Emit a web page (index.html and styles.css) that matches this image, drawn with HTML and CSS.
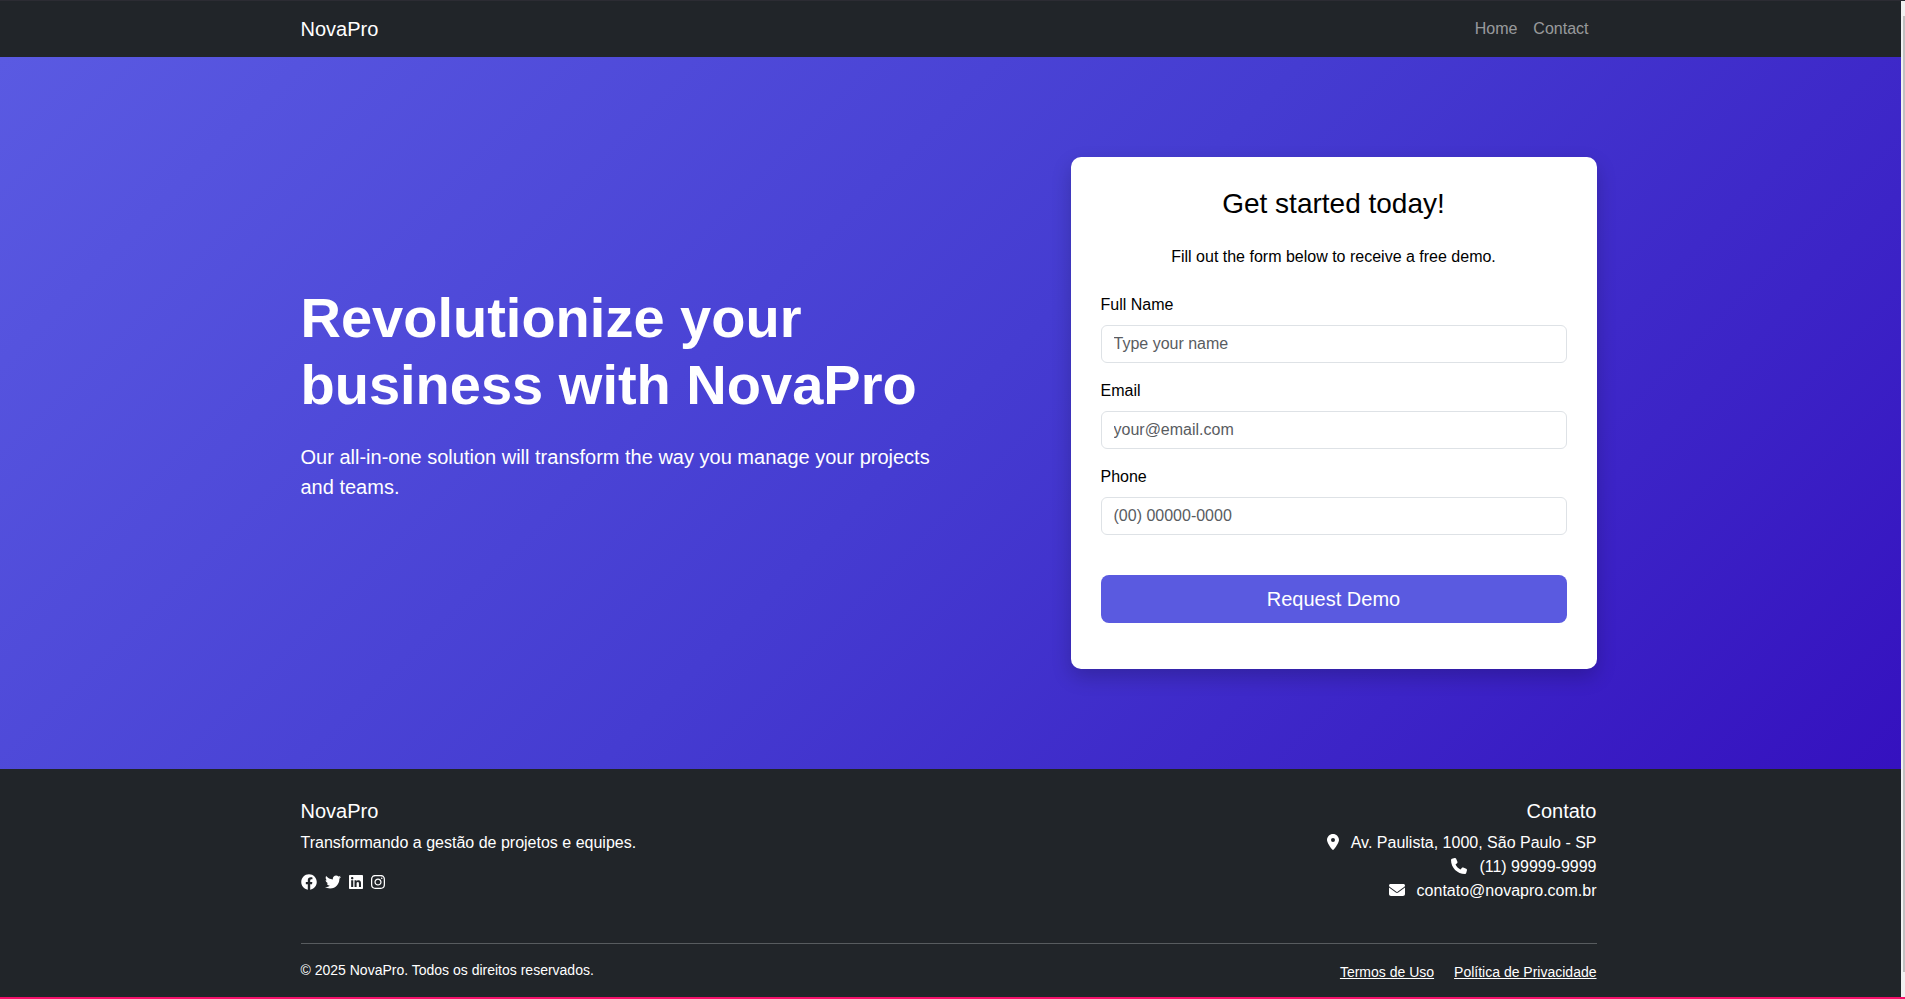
FILE: index.html
```html
<!DOCTYPE html>
<html lang="en">
<head>
<meta charset="utf-8">
<meta name="viewport" content="width=device-width, initial-scale=1">
<title>NovaPro</title>
<link rel="stylesheet" href="styles.css">
</head>
<body>
<div class="viewport">
  <div class="page">
    <header class="navbar">
      <div class="container navbar-inner">
        <a class="brand" href="#">NovaPro</a>
        <nav class="nav">
          <a class="nav-link" href="#">Home</a>
          <a class="nav-link" href="#contact">Contact</a>
        </nav>
      </div>
    </header>

    <main class="hero">
      <div class="container hero-grid">
        <div class="hero-copy">
          <h1 class="hero-title">Revolutionize your business with NovaPro</h1>
          <p class="hero-lead">Our all-in-one solution will transform the way you manage your projects and teams.</p>
        </div>
        <form class="card">
          <h2 class="card-title">Get started today!</h2>
          <p class="card-text">Fill out the form below to receive a free demo.</p>
          <div class="field">
            <label for="name">Full Name</label>
            <input id="name" type="text" placeholder="Type your name">
          </div>
          <div class="field">
            <label for="email">Email</label>
            <input id="email" type="email" placeholder="your@email.com">
          </div>
          <div class="field">
            <label for="phone">Phone</label>
            <input id="phone" type="tel" placeholder="(00) 00000-0000">
          </div>
          <button class="submit" type="button">Request Demo</button>
        </form>
      </div>
    </main>

    <footer class="footer" id="contact">
      <div class="container">
        <div class="footer-top">
          <div>
            <h5 class="footer-title">NovaPro</h5>
            <p class="footer-text">Transformando a gestão de projetos e equipes.</p>
            <div class="social">
              <a href="#" aria-label="Facebook"><svg class="icon" viewBox="0 0 512 512"><path d="M504 256C504 119 393 8 256 8S8 119 8 256c0 123.78 90.69 226.38 209.25 245V327.69h-63V256h63v-54.64c0-62.15 37-96.48 93.67-96.48 27.14 0 55.52 4.84 55.52 4.84v61h-31.28c-30.8 0-40.41 19.12-40.41 38.73V256h68.78l-11 71.69h-57.78V501C413.31 482.38 504 379.78 504 256z"/></svg></a>
              <a href="#" aria-label="Twitter"><svg class="icon" viewBox="0 0 512 512"><path d="M459.37 151.716c.325 4.548.325 9.097.325 13.645 0 138.72-105.583 298.558-298.558 298.558-59.452 0-114.68-17.219-161.137-47.106 8.447.974 16.568 1.299 25.34 1.299 49.055 0 94.213-16.568 130.274-44.832-46.132-.975-84.792-31.188-98.112-72.772 6.498.974 12.995 1.624 19.818 1.624 9.421 0 18.843-1.3 27.614-3.573-48.081-9.747-84.143-51.98-84.143-102.985v-1.299c13.969 7.797 30.214 12.67 47.431 13.319-28.264-18.843-46.781-51.005-46.781-87.391 0-19.492 5.197-37.36 14.294-52.954 51.655 63.675 129.3 105.258 216.365 109.807-1.624-7.797-2.599-15.918-2.599-24.04 0-57.828 46.782-104.934 104.934-104.934 30.213 0 57.502 12.67 76.67 33.137 23.715-4.548 46.456-13.32 66.599-25.34-7.798 24.366-24.366 44.833-46.132 57.827 21.117-2.273 41.584-8.122 60.426-16.243-14.292 20.791-32.161 39.308-52.628 54.253z"/></svg></a>
              <a href="#" aria-label="LinkedIn"><svg class="icon icon-narrow" viewBox="0 0 448 512"><path d="M416 32H31.9C14.3 32 0 46.5 0 64.3v383.4C0 465.5 14.3 480 31.9 480H416c17.6 0 32-14.5 32-32.3V64.3c0-17.8-14.4-32.3-32-32.3zM135.4 416H69V202.2h66.5V416zm-33.2-243c-21.3 0-38.5-17.3-38.5-38.5S80.9 96 102.2 96c21.2 0 38.5 17.3 38.5 38.5 0 21.3-17.2 38.5-38.5 38.5zm282.1 243h-66.4V312c0-24.8-.5-56.7-34.5-56.7-34.6 0-39.9 27-39.9 54.9V416h-66.4V202.2h63.7v29.2h.9c8.9-16.8 30.6-34.5 62.9-34.5 67.2 0 79.7 44.3 79.7 101.9V416z"/></svg></a>
              <a href="#" aria-label="Instagram"><svg class="icon icon-narrow" viewBox="0 0 448 512"><path d="M224.1 141c-63.6 0-114.9 51.3-114.9 114.9s51.3 114.9 114.9 114.9S339 319.5 339 255.9 287.7 141 224.1 141zm0 189.6c-41.1 0-74.7-33.5-74.7-74.7s33.5-74.7 74.7-74.7 74.7 33.5 74.7 74.7-33.6 74.7-74.7 74.7zm146.4-194.3c0 14.9-12 26.8-26.8 26.8-14.9 0-26.8-12-26.8-26.8s12-26.8 26.8-26.8 26.8 12 26.8 26.8zm76.1 27.2c-1.7-35.9-9.9-67.7-36.2-93.9-26.2-26.2-58-34.4-93.9-36.2-37-2.1-147.9-2.1-184.9 0-35.8 1.7-67.6 9.9-93.9 36.1s-34.4 58-36.2 93.9c-2.1 37-2.1 147.9 0 184.9 1.7 35.9 9.9 67.7 36.2 93.9s58 34.4 93.9 36.2c37 2.1 147.9 2.1 184.9 0 35.9-1.7 67.7-9.9 93.9-36.2 26.2-26.2 34.4-58 36.2-93.9 2.1-37 2.1-147.8 0-184.8zM398.8 388c-7.8 19.6-22.9 34.7-42.6 42.6-29.5 11.7-99.5 9-132.1 9s-102.7 2.6-132.1-9c-19.6-7.8-34.7-22.9-42.6-42.6-11.7-29.5-9-99.5-9-132.1s-2.6-102.7 9-132.1c7.8-19.6 22.9-34.7 42.6-42.6 29.5-11.7 99.5-9 132.1-9s102.7-2.6 132.1 9c19.6 7.8 34.7 22.9 42.6 42.6 11.7 29.5 9 99.5 9 132.1s2.7 102.7-9 132.1z"/></svg></a>
            </div>
          </div>
          <div class="footer-contact">
            <h5 class="footer-title">Contato</h5>
            <ul class="contact-list">
              <li><svg class="icon icon-pin" viewBox="0 0 384 512"><path d="M215.7 499.2C267 435 384 279.4 384 192 384 86 298 0 192 0S0 86 0 192c0 87.4 117 243 168.3 307.2 12.3 15.3 35.1 15.3 47.4 0zM192 128a64 64 0 1 1 0 128 64 64 0 1 1 0-128z"/></svg>Av. Paulista, 1000, São Paulo - SP</li>
              <li><svg class="icon" viewBox="0 0 512 512"><path d="M164.900 24.600c-7.700-18.600-28-28.500-47.400-23.200l-88 24C12.100 30.200 0 46 0 64c0 247.400 200.600 448 448 448 18 0 33.800-12.100 38.600-29.500l24-88c5.300-19.400-4.600-39.700-23.200-47.400l-96-40c-16.300-6.800-35.200-2.100-46.300 11.600L304.700 368C234.300 334.700 177.300 277.700 144 207.300L193.300 167c13.700-11.200 18.400-30 11.600-46.300l-40-96z"/></svg>(11) 99999-9999</li>
              <li><svg class="icon" viewBox="0 0 512 512"><path d="M48 64C21.500 64 0 85.500 0 112c0 15.100 7.100 29.300 19.200 38.400l217.600 163.200c11.400 8.500 27 8.500 38.400 0l217.600-163.200c12.100-9.100 19.200-23.300 19.200-38.400 0-26.500-21.500-48-48-48H48zM0 176v208c0 35.300 28.700 64 64 64h384c35.300 0 64-28.700 64-64V176L294.400 339.200c-22.800 17.100-54 17.100-76.800 0L0 176z"/></svg>contato@novapro.com.br</li>
            </ul>
          </div>
        </div>
        <div class="footer-bottom">
          <p class="copyright">© 2025 NovaPro. Todos os direitos reservados.</p>
          <div class="legal">
            <a href="#">Termos de Uso</a>
            <a href="#">Política de Privacidade</a>
          </div>
        </div>
      </div>
    </footer>
  </div>
  <div class="scrollbar"><div class="scrollbar-thumb"></div></div>
</div>
</body>
</html>
```
FILE: styles.css
```css
*, *::before, *::after { box-sizing: border-box; }

body {
  margin: 0;
  font-family: "Liberation Sans", Arial, sans-serif;
  font-size: 16px;
  line-height: 24px;
  color: #000;
  background: #212529;
}

h1, h2, h5, p, ul { margin: 0; padding: 0; font-weight: 400; }

.viewport {
  display: flex;
  min-height: 100vh;
  border-top: 1px solid #2c2c33;
  border-bottom: 2px solid #f5106a;
}

.page {
  flex: 1;
  display: flex;
  flex-direction: column;
}

.scrollbar {
  display: flex;
  width: 4px;
  padding: 15px 0 25px 2px;
  background: #f1f1f1;
}
.scrollbar-thumb { flex: 1; background: #c1c1c1; }

.navbar, .hero, .footer { padding-right: 4px; }

.container {
  width: 100%;
  max-width: 1320px;
  margin: 0 auto;
  padding: 0 12px;
}

/* Navigation */
.navbar { background: #212529; }
.navbar-inner {
  display: flex;
  align-items: center;
  justify-content: space-between;
  height: 56px;
}
.brand {
  font-size: 20px;
  line-height: 30px;
  color: #fff;
  text-decoration: none;
}
.nav { display: flex; }
.nav-link {
  padding: 8px;
  color: rgba(255, 255, 255, 0.55);
  text-decoration: none;
}

/* Hero */
.hero {
  padding-top: 100px;
  padding-bottom: 100px;
  background: linear-gradient(135deg, #5a5ae2, #453cd1 50%, #3511bf);
}
.hero-grid {
  display: grid;
  grid-template-columns: repeat(12, 1fr);
  column-gap: 24px;
  align-items: center;
}
.hero-copy {
  grid-column: 1 / span 6;
  padding-bottom: 40px;
  color: #fff;
}
.hero-title {
  margin-bottom: 24px;
  font-size: 56px;
  line-height: 67px;
  font-weight: 700;
}
.hero-lead { font-size: 20px; line-height: 30px; }

.card {
  grid-column: 8 / span 5;
  padding: 30px 30px 46px;
  background: #fff;
  border-radius: 10px;
  box-shadow: 0 8px 20px rgba(0, 0, 0, 0.2);
}
.card-title {
  margin-bottom: 24px;
  font-size: 28px;
  line-height: 34px;
  text-align: center;
}
.card-text { margin-bottom: 24px; text-align: center; }

.field { margin-bottom: 16px; }
.field label { display: block; margin-bottom: 8px; }
.field input {
  display: block;
  width: 100%;
  height: 38px;
  padding: 6px 12px;
  font: inherit;
  color: #212529;
  background: #fff;
  border: 1px solid #dee2e6;
  border-radius: 6px;
}
.field input::placeholder { color: #595c5f; opacity: 1; }

.submit {
  display: block;
  width: 100%;
  height: 48px;
  margin-top: 40px;
  font: inherit;
  font-size: 20px;
  color: #fff;
  background: #5a5ae0;
  border: 0;
  border-radius: 8px;
}

/* Footer */
.footer {
  flex: 1;
  padding-top: 30px;
  padding-bottom: 10px;
  color: #fff;
  background: #212529;
}
.footer a { color: #fff; }
.footer-top {
  display: flex;
  justify-content: space-between;
  padding-bottom: 40px;
}
.footer-title { margin-bottom: 8px; font-size: 20px; line-height: 24px; }
.footer-text { margin-bottom: 16px; }
.social { display: flex; align-items: center; gap: 8px; height: 22px; }
.social a { display: flex; }

.icon { width: 16px; height: 16px; fill: currentColor; }
.icon-narrow { width: 14px; }
.icon-pin { width: 12px; }

.contact-list { list-style: none; }
.contact-list li {
  display: flex;
  align-items: center;
  justify-content: flex-end;
  gap: 12px;
}
.contact-list .icon { margin-bottom: 2px; }
.footer-contact { text-align: right; }

.footer-bottom {
  display: flex;
  justify-content: space-between;
  padding-top: 16px;
  border-top: 1px solid #585c5f;
  font-size: 14px;
}
.copyright { line-height: 21px; }
.legal { display: flex; gap: 20px; line-height: 25px; }
```
